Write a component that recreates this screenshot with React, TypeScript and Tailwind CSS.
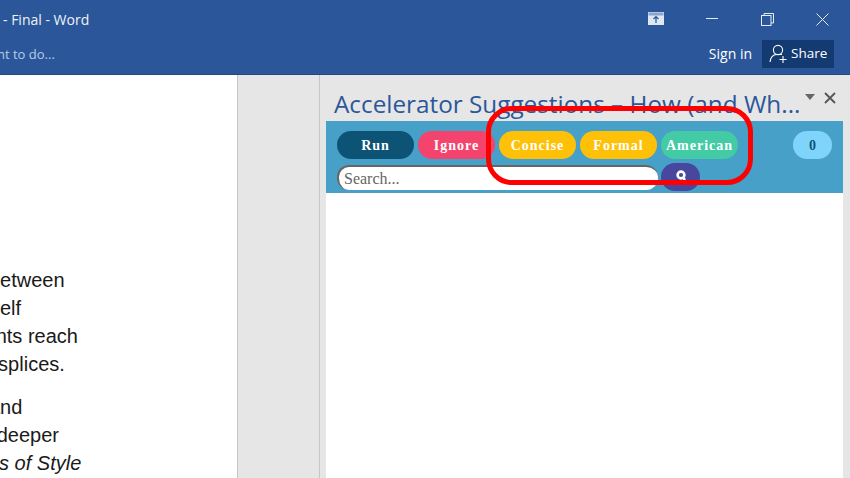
import React from 'react';

const pill = 'w-[77px] h-[28px] rounded-[14px] flex items-center justify-center text-white text-[14px] font-bold tracking-[1px] font-["Liberation_Serif",serif]';

const docLines = [
  { text: 'between', ml: '-ml-[11px]' },
  { text: 'itself', ml: '-ml-[20px]' },
  { text: 'points reach', ml: '-ml-[31px]' },
  { text: 'comma splices.', ml: '-ml-[73px]' },
];

const docLines2 = [
  { text: 'and', ml: '-ml-[11px]' },
  { text: 'a deeper', ml: '-ml-[20px]' },
];

export default function App() {
  return (
    <div className="relative w-[850px] h-[478px] overflow-hidden flex flex-col bg-[#e6e6e6] font-['Open_Sans',sans-serif]">
      {/* title bar */}
      <header className="h-[75px] shrink-0 bg-[#2b579a] border-b border-[#1f4a8a] flex flex-col text-white">
        <div className="h-[38px] flex items-center">
          <span className="text-[14px] pl-[3px] text-[#eef2f8]">- Final - Word</span>
          <div className="ml-auto flex items-center">
            <svg width="16" height="13" viewBox="0 0 16 13" className="mr-[42px] mt-[-2px]">
              <rect x="0.5" y="0.5" width="15" height="12" fill="#dfe7f3" stroke="#dfe7f3" />
              <rect x="0.5" y="0.5" width="15" height="3" fill="#8aa5cc" />
              <path d="M8 11V4.5M5.5 7L8 4.5L10.5 7" stroke="#2b579a" strokeWidth="1.2" fill="none" />
            </svg>
            <svg width="12" height="2" viewBox="0 0 12 2" className="mr-[43px]">
              <rect width="12" height="1" fill="#e6ecf5" />
            </svg>
            <svg width="13" height="13" viewBox="0 0 13 13" className="mr-[42px]" fill="none" stroke="#e6ecf5">
              <rect x="0.5" y="2.5" width="9.5" height="10" />
              <path d="M3 2.5V0.5H12.5V10H10" />
            </svg>
            <svg width="13" height="13" viewBox="0 0 13 13" className="mr-[21px]" stroke="#e6ecf5" strokeWidth="1">
              <path d="M0.5 0.5L12.5 12.5M12.5 0.5L0.5 12.5" />
            </svg>
          </div>
        </div>
        <div className="flex-1 flex items-start">
          <span className="text-[13px] pt-[7px] text-[#b9cbe6] -ml-[3px]">nt to do...</span>
          <div className="ml-auto flex items-start mr-[16px]">
            <span className="text-[14px] mt-[6px] mr-[10px] leading-[20px]">Sign in</span>
            <div className="w-[72px] h-[28px] mt-[2px] bg-[#143a72] flex items-center pl-[7px] gap-[2px]">
              <svg width="20" height="20" viewBox="0 0 20 20" fill="none" stroke="#fff" strokeWidth="1.1">
                <circle cx="9" cy="6" r="4.6" />
                <path d="M1 18C1.5 13.5 4 11 7 10.5M11 10.5H13" />
                <path d="M14 12V19M10.5 15.5H17.5" />
              </svg>
              <span className="text-[13.5px] leading-none">Share</span>
            </div>
          </div>
        </div>
      </header>

      <main className="flex-1 flex min-h-0">
        {/* document page */}
        <section className="w-[237px] shrink-0 bg-white overflow-hidden pt-[191px] text-[20px] leading-[28px] text-[#1a1a1a] font-['Liberation_Sans',sans-serif] whitespace-nowrap">
          {docLines.map((l) => (
            <div key={l.text} className={l.ml}>{l.text}</div>
          ))}
          <div className="h-[15px]" />
          {docLines2.map((l) => (
            <div key={l.text} className={l.ml}>{l.text}</div>
          ))}
          <div className="italic -ml-[1px]">s of Style</div>
        </section>

        <div className="w-[83px] shrink-0 bg-[#e6e6e6] border-l border-r border-[#c6c6c6]" />

        {/* task pane */}
        <aside className="flex-1 flex flex-col min-w-0 pl-[6px] pr-[7px]">
          <div className="h-[46px] shrink-0 flex items-start relative">
            <span className="pl-[8px] pt-[11px] text-[24.3px] leading-[36px] text-[#2b579a] whitespace-nowrap">Accelerator Suggestions – How (and Wh...</span>
            <svg width="10" height="6" viewBox="0 0 10 6" className="absolute left-[479px] top-[19px]">
              <path d="M0 0H10L5 6Z" fill="#666" />
            </svg>
            <svg width="12" height="12" viewBox="0 0 12 12" className="absolute left-[498px] top-[17px]" stroke="#555" strokeWidth="1.8">
              <path d="M1 1L11 11M11 1L1 11" />
            </svg>
          </div>

          <div className="h-[72px] shrink-0 bg-[#47a0c8] pl-[11px] pr-[11px] pt-[10px] flex flex-col">
            <div className="flex items-center gap-[4px]">
              <button className={`${pill} bg-[#0d5376]`}>Run</button>
              <button className={`${pill} bg-[#f4436c]`}>Ignore</button>
              <button className={`${pill} bg-[#ffc107]`}>Concise</button>
              <button className={`${pill} bg-[#ffc107]`}>Formal</button>
              <button className={`${pill} bg-[#42cba5]`}>American</button>
              <div className="ml-auto w-[39px] h-[28px] rounded-[14px] bg-[#7fd4fb] flex items-center justify-center text-[#0d5376] text-[14px] font-bold font-['Liberation_Serif',serif]">0</div>
            </div>
            <div className="flex items-start gap-[3px] mt-[4px]">
              <input
                placeholder="Search..."
                className="w-[321px] h-[25px] mt-[2px] rounded-[12px] bg-white border-l-2 border-t-2 border-[#666] pl-[5px] text-[16px] text-[#555] placeholder:text-[#666] font-['Liberation_Serif',serif] outline-none"
              />
              <button className="w-[39px] h-[28px] rounded-[14px] bg-[#47479e] flex items-start justify-center overflow-hidden">
                <svg width="14" height="16" viewBox="0 0 14 16" className="mt-[7px]" fill="none" stroke="#fff" strokeWidth="2.6">
                  <circle cx="7" cy="5" r="3.4" />
                  <path d="M10 8L11 13" />
                </svg>
              </button>
            </div>
          </div>

          <div className="flex-1 bg-white" />
        </aside>
      </main>

      {/* red annotation drawn over the screenshot */}
      <div className="absolute left-[486px] top-[106px] w-[267px] h-[79px] border-[5px] border-[#ff0000] rounded-[26px] pointer-events-none" />
    </div>
  );
}
